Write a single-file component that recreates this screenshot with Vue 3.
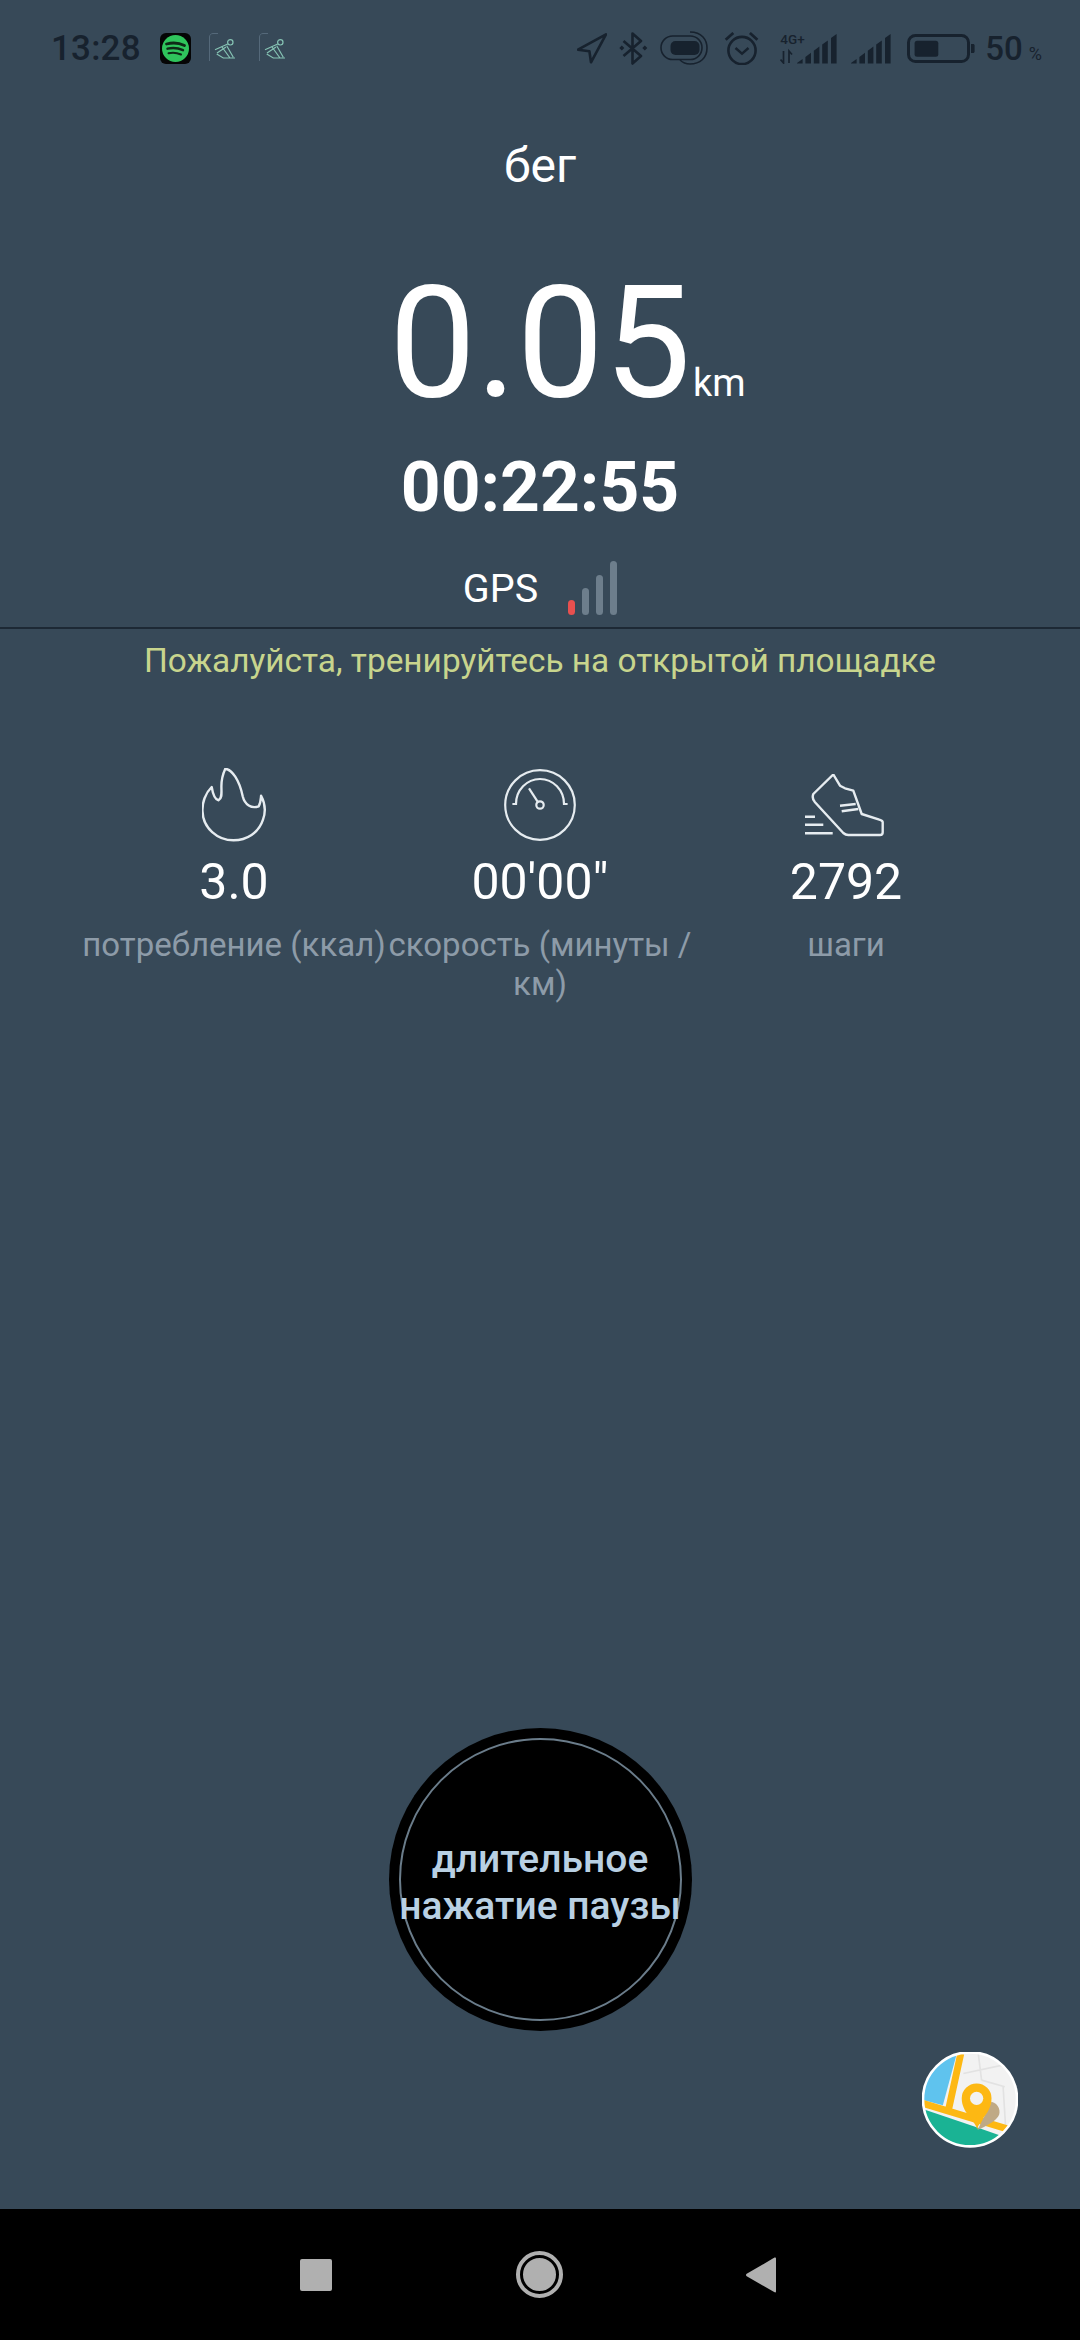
<script setup>
const stats = [
  { id: 'kcal', value: '3.0', label: 'потребление (ккал)' },
  { id: 'pace', value: `00'00"`, label: 'скорость (минуты / км)' },
  { id: 'steps', value: '2792', label: 'шаги' }
]

// slanted tops for the status bar signal icons
const slope = (x) => (30 - (x - 17) * 0.732).toFixed(1)
const signalBars = [17, 25.4, 33.8, 42.2, 51].map((x) => {
  const r = x + 5.6
  return `${x},30.5 ${r},30.5 ${r},${slope(r)} ${x},${slope(x)}`
})

const gpsBars = [
  { id: 1, height: 15, weak: true },
  { id: 2, height: 27, weak: false },
  { id: 3, height: 40, weak: false },
  { id: 4, height: 54, weak: false }
]
</script>

<template>
  <div class="screen">
    <header class="status">
      <span class="clock">13:28</span>
      <svg class="spotify" width="31" height="31" viewBox="0 0 31 31">
        <rect width="31" height="31" rx="6" fill="#050505" />
        <circle cx="15.5" cy="15.5" r="13.5" fill="#2fc45c" />
        <g fill="none" stroke="#0f2a17" stroke-linecap="round">
          <path d="M6.500 11c6-1.600 12.500-1.200 18 1.500" stroke-width="2.800" />
          <path d="M7.500 15.700c5-1.200 10.500-.8 15.500 1.500" stroke-width="2.400" />
          <path d="M8.500 20.200c4-1 8.500-.6 12.500 1.300" stroke-width="2" />
        </g>
      </svg>
      <svg v-for="n in 2" :key="n" class="runner" width="34" height="30" viewBox="0 0 34 30">
        <path d="M.5 28V4C.5 2 2 .5 4 .5h5" fill="none" stroke="#55697a" stroke-width="1" />
        <g fill="none" stroke="#86c4b4" stroke-width="1.200">
          <circle cx="21.300" cy="9.300" r="2.700" />
          <path d="M6 16.700 18.700 11M8 20l9-6M17.700 12.700l6.600 11.600M13 14l8 11M7.700 21l6.600 4H26" />
        </g>
      </svg>

      <svg class="st-icon st-loc" width="30" height="31" viewBox="0 0 30 31">
        <path d="M29 1.300 1 16.700l11.400 1.600L14 29.300z" fill="none" stroke="#17222e" stroke-width="2.600" stroke-linejoin="round" />
      </svg>
      <svg class="st-icon st-bt" width="29" height="33" viewBox="0 0 29 33">
        <path d="M4.500 9 22 24l-8.500 7.500v-30L22 9 4.500 24" fill="none" stroke="#17222e" stroke-width="2.600" stroke-linejoin="round" />
        <path d="M2.800 13.500 5.300 16l-2.500 2.500L.3 16zM25.800 13.500l2.500 2.500-2.500 2.500-2.500-2.500z" fill="#17222e" />
      </svg>
      <svg class="st-icon st-saver" width="48" height="34" viewBox="0 0 48 34">
        <rect x="1" y="5" width="41" height="23.500" rx="11.700" fill="none" stroke="#17222e" stroke-width="1.600" />
        <rect x="10.500" y="10" width="29" height="14" rx="5" fill="#17222e" />
        <path d="M30 1c12 0 17 8 17 16 0 10-7 16-17 16-5 0-8-2-10-4" fill="none" stroke="#17222e" stroke-width="1.600" />
      </svg>
      <svg class="st-icon st-alarm" width="35" height="33" viewBox="0 0 35 33">
        <circle cx="18" cy="18.500" r="13.600" fill="none" stroke="#17222e" stroke-width="2.600" />
        <path d="m11.500 16 6.500 5.600 6.500-5.600" fill="none" stroke="#17222e" stroke-width="2.400" />
        <path d="M1.700 7.700 9.300 1M25.900 1l7.500 6.700" fill="none" stroke="#17222e" stroke-width="2.800" />
      </svg>
      <div class="st-icon st-sig1">
        <span class="net">4G+</span>
        <svg width="57" height="31" viewBox="0 0 57 31">
          <path d="M3.500 18v12L.5 26.500M9 30V18l3 3.500" fill="none" stroke="#17222e" stroke-width="1.700" />
          <polygon v-for="bar in signalBars" :key="bar" :points="bar" fill="#17222e" />
        </svg>
      </div>
      <svg class="st-icon st-sig2" width="40" height="31" viewBox="17 0 40 31">
        <polygon v-for="bar in signalBars" :key="bar" :points="bar" fill="#17222e" />
      </svg>
      <svg class="st-icon st-batt" width="68" height="29" viewBox="0 0 68 29">
        <rect x="1.500" y="1.500" width="60" height="26" rx="7" fill="none" stroke="#17222e" stroke-width="3" />
        <rect x="7.600" y="6.700" width="23.700" height="16" rx="2.500" fill="#17222e" />
        <path d="M64 10h2c1 0 1.600.6 1.600 1.500v6c0 .9-.6 1.500-1.600 1.500h-2z" fill="#17222e" />
      </svg>
      <span class="pct">50<small>%</small></span>
    </header>

    <main class="run">
      <h1 class="title">бег</h1>

      <div class="distance">
        <span class="distance-num">0.05</span>
        <span class="distance-unit">km</span>
      </div>
      <div class="elapsed">00:22:55</div>

      <div class="gps">
        <span>GPS</span>
        <div class="gps-bars">
          <i
            v-for="bar in gpsBars"
            :key="bar.id"
            :class="{ weak: bar.weak }"
            :style="{ height: `${bar.height}px` }"
          ></i>
        </div>
      </div>
      <div class="rule"></div>
      <p class="hint">Пожалуйста, тренируйтесь на открытой площадке</p>

      <section class="stats">
        <div v-for="item in stats" :key="item.id" class="stat">
          <div class="stat-icon">
            <svg v-if="item.id === 'kcal'" width="64" height="74" viewBox="0 0 64 74">
              <path
                d="M23.300.7C30 1.700 37.300 11.700 40.700 28.300 42.700 36.700 49.400 41 56.700 38.300 58.700 35 58.700 31.700 59.100 27.700 63 35 64 43.300 61 51.700 56.700 65 44.600 72.300 31.500 72.300 15.500 72.300 1 60 .5 43.300 0 35 3.400 25 9.700 19 10.700 25 13.100 31.700 16.500 32.300 20.400 30 19.400 25 19.400 18.300 19.400 11.700 21.300 5 23.300.7Z"
                fill="none" stroke="#e6ecf0" stroke-width="2.400" stroke-linejoin="round"
              />
            </svg>
            <svg v-else-if="item.id === 'pace'" width="72" height="72" viewBox="0 0 72 72">
              <g fill="none" stroke="#e6ecf0" stroke-width="2.200">
                <circle cx="36" cy="36" r="34.800" />
                <path d="M8.400 35H12A24 25 0 0 1 60 35h3.600" />
                <path d="M25 19.300 33.600 32.700" />
                <circle cx="36" cy="36" r="3.700" />
              </g>
            </svg>
            <svg v-else class="shoe" width="79" height="63" viewBox="0 0 79 63">
              <g fill="none" stroke="#e6ecf0" stroke-width="2.400" stroke-linejoin="round">
                <path d="M28.300.5 8.300 20C7 23.300 8 26 10 28.300L38.300 59C40 60.500 41.500 61 43.300 61H75C76.700 61 77.700 60 77.700 58.300V48.300C77.700 47 76 46.200 74.300 45.700L56.700 40 48.300 16.700 40 14.300 35 11.700Z" />
                <path d="M35 31.700 50.700 30M36.700 37.300 53.300 35M0 42.700H10M0 50.700H18.300M0 59.300H27.700" />
              </g>
            </svg>
          </div>
          <div class="stat-value">{{ item.value }}</div>
          <div class="stat-label">{{ item.label }}</div>
        </div>
      </section>

      <button type="button" class="pause">
        <span>длительное<br />нажатие паузы</span>
      </button>
    </main>

    <button type="button" class="map-fab">
      <svg width="96" height="96" viewBox="65 65 290 290">
        <defs>
          <clipPath id="mapClip"><circle cx="210" cy="208" r="142" /></clipPath>
        </defs>
        <g clip-path="url(#mapClip)">
          <rect x="60" y="60" width="300" height="300" fill="#f2f2f2" />
          <path d="M235 70 245 150M190 130 330 100M310 170l10 160M245 150l70 20" fill="none" stroke="#e2e2e2" stroke-width="5" />
          <polygon points="170,70 128,226 60,208 60,70" fill="#5fc3ee" />
          <polygon points="60,235 230,292 310,320 310,360 60,360" fill="#1ab394" />
          <path d="M182 70 146 236M60 218 325 298" fill="none" stroke="#fdb813" stroke-width="21" />
          <path d="M275 215c22 5 30 30 20 45-8 12-30 28-62 40z" fill="#bfa985" />
          <path d="M232 300c-6-30-47-50-47-95a45 45 0 0 1 90 0c0 45-38 65-43 95z" fill="#fdb813" />
          <circle cx="230" cy="205" r="20" fill="#f2f2f2" />
        </g>
        <circle cx="210" cy="208" r="142" fill="none" stroke="#fff" stroke-width="8" />
      </svg>
    </button>

    <nav class="navbar">
      <span class="nav-square"></span>
      <span class="nav-home"></span>
      <svg class="nav-back" width="30" height="36" viewBox="0 0 30 36">
        <path d="M29 .5c.6 0 1 .5 1 1v33c0 .8-.7 1.200-1.400.8L.7 19.200c-.9-.5-.9-1.800 0-2.400L28.500.6c.2-.1.3-.1.5-.1z" fill="#b0b0b0" />
      </svg>
    </nav>
  </div>
</template>

<style>
html,
body {
  margin: 0;
  background: #374958;
}
</style>

<style scoped>
.screen {
  position: relative;
  width: 1080px;
  height: 2340px;
  display: flex;
  flex-direction: column;
  overflow: hidden;
  background: #374958;
  color: #fff;
  font-family: Roboto, "Noto Sans", sans-serif;
}

.status {
  height: 96px;
  flex: none;
  display: flex;
  align-items: center;
  padding: 0 38px 0 51px;
  box-sizing: border-box;
  color: #17222e;
}

.clock {
  font-size: 35px;
  font-weight: 500;
  letter-spacing: 0.2px;
}

.spotify {
  margin-left: 19px;
}

.runner {
  margin-left: 18px;
}

.runner + .runner {
  margin-left: 16px;
}

.st-icon {
  flex: none;
}

.st-loc {
  margin-left: auto;
}

.st-bt {
  margin-left: 12px;
}

.st-saver {
  margin-left: 12px;
}

.st-alarm {
  margin-left: 16px;
}

.st-sig1 {
  position: relative;
  margin-left: 21px;
  width: 57px;
  height: 31px;
}

.st-sig1 svg {
  display: block;
}

.st-sig2 {
  margin-left: 14px;
}

.st-batt {
  margin-left: 16px;
}

.net {
  position: absolute;
  left: 0;
  top: -2px;
  font-size: 13.5px;
  font-weight: 500;
  line-height: 16px;
}

.pct {
  margin-left: 10px;
  font-size: 33px;
  font-weight: 500;
  line-height: 1;
}

.pct small {
  margin-left: 6px;
  font-size: 18px;
  font-weight: 400;
}

.run {
  flex: 1;
  display: flex;
  flex-direction: column;
  align-items: stretch;
  min-height: 0;
}

.title {
  margin: 40px 0 0;
  font-size: 48px;
  font-weight: 400;
  line-height: 60px;
  text-align: center;
}

.distance {
  margin-top: 72px;
  display: grid;
  grid-template-columns: 1fr auto 1fr;
  align-items: baseline;
}

.distance-num {
  grid-column: 2;
  font-size: 155px;
  font-weight: 400;
  line-height: 150px;
}

.distance-unit {
  padding-left: 2px;
  font-size: 38px;
}

.elapsed {
  margin-top: 30px;
  font-size: 69.5px;
  font-weight: 700;
  line-height: 80px;
  text-align: center;
}

.gps {
  margin-top: 32px;
  height: 56px;
  display: flex;
  align-items: center;
  justify-content: center;
  gap: 30px;
  font-size: 39.5px;
}

.gps-bars {
  display: flex;
  align-items: flex-end;
  gap: 7px;
  height: 54px;
}

.gps-bars i {
  width: 7px;
  border-radius: 3.5px;
  background: #6d7e8c;
}

.gps-bars i.weak {
  background: #e8504f;
}

.rule {
  margin-top: 11px;
  height: 2px;
  background: #1d2935;
}

.hint {
  margin: 12px 0 0;
  font-size: 33.4px;
  line-height: 40px;
  text-align: center;
  color: #c8d58d;
}

.stats {
  margin-top: 87px;
  padding: 0 81px;
  display: grid;
  grid-template-columns: repeat(3, 306px);
}

.stat {
  display: flex;
  flex-direction: column;
  align-items: center;
  text-align: center;
}

.stat-icon {
  height: 74px;
  display: flex;
  align-items: center;
  justify-content: center;
}

.shoe {
  margin-right: 4px;
}

.stat-value {
  margin-top: 10px;
  font-size: 50px;
  line-height: 60px;
}

.stat-label {
  margin-top: 13px;
  font-size: 33px;
  line-height: 39px;
  color: #8d9ba8;
}

.pause {
  position: relative;
  flex: none;
  margin: auto auto 178px;
  width: 303px;
  height: 303px;
  padding: 7px 0 0;
  border: none;
  border-radius: 50%;
  background: #000;
  color: #b9d0e3;
  font-family: inherit;
  font-size: 39px;
  font-weight: 500;
  line-height: 47px;
  white-space: nowrap;
}

.pause::before {
  content: "";
  position: absolute;
  inset: 10px;
  border: 2px solid #6a7c8a;
  border-radius: 50%;
}

.pause span {
  position: relative;
}

.map-fab {
  position: absolute;
  right: 62px;
  bottom: 192px;
  width: 96px;
  height: 96px;
  padding: 0;
  border: none;
  border-radius: 50%;
  background: transparent;
}

.map-fab svg {
  display: block;
}

.navbar {
  flex: none;
  height: 131px;
  padding: 0 304px 0 300px;
  box-sizing: border-box;
  display: flex;
  align-items: center;
  justify-content: space-between;
  background: #000;
}

.nav-square {
  width: 32px;
  height: 32px;
  border-radius: 2px;
  background: #b0b0b0;
}

.nav-home {
  width: 33px;
  height: 33px;
  border-radius: 50%;
  background: #b0b0b0;
  border: 3px solid #000;
  outline: 4px solid #b0b0b0;
  outline-offset: 0;
  box-sizing: content-box;
}

.nav-back {
  display: block;
}
</style>
